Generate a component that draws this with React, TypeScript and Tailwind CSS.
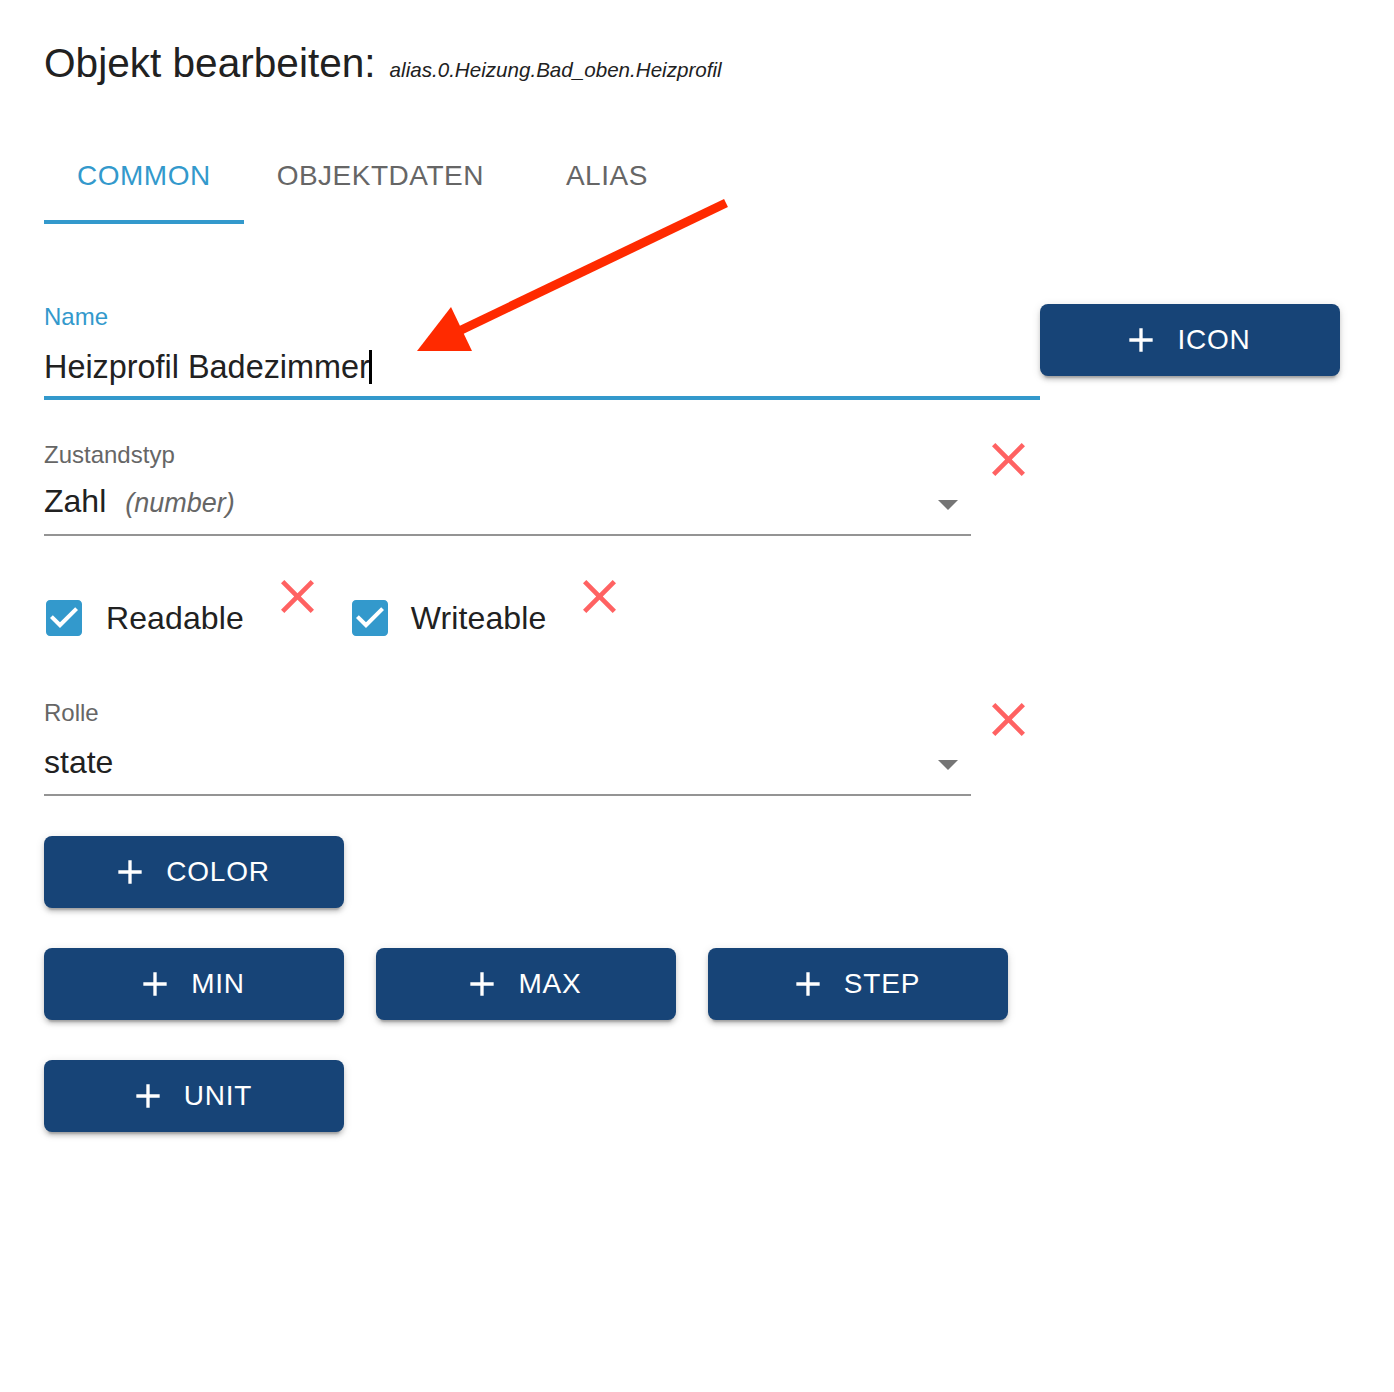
import React from "react";

const BLUE = "#3399cc";

function PlusIcon() {
  return (
    <svg viewBox="0 0 24 24" className="w-[40px] h-[40px] shrink-0 -ml-[8px]" fill="white">
      <path d="M19 13h-6v6h-2v-6H5v-2h6V5h2v6h6v2z" />
    </svg>
  );
}

function AddButton({ label }: { label: string }) {
  return (
    <div className="w-[300px] h-[72px] rounded-[8px] bg-[#174477] flex items-center justify-center text-white text-[28px] leading-[32px] tracking-[0.8px] shadow-[0_6px_2px_-4px_rgba(0,0,0,0.2),0_4px_4px_0_rgba(0,0,0,0.14),0_2px_10px_0_rgba(0,0,0,0.12)]">
      <PlusIcon />
      <span className="ml-[16px]">{label}</span>
    </div>
  );
}

function RedX({ className = "" }: { className?: string }) {
  return (
    <svg viewBox="5 5 14 14" className={"w-[33px] h-[33px] shrink-0 " + className} fill="#ff6262">
      <path d="M19 6.41 17.59 5 12 10.59 6.41 5 5 6.41 10.59 12 5 17.59 6.41 19 12 13.41 17.59 19 19 17.59 13.41 12z" />
    </svg>
  );
}

function DropArrow() {
  return (
    <svg viewBox="0 0 24 24" className="w-[48px] h-[48px] shrink-0 -mr-[1px] mt-[4px]" fill="#757575">
      <path d="M7 10l5 5 5-5z" />
    </svg>
  );
}

function CheckIcon() {
  return (
    <svg viewBox="0 0 24 24" className="w-[48px] h-[48px] shrink-0" fill={BLUE}>
      <path d="M19 3H5c-1.11 0-2 .9-2 2v14c0 1.1.89 2 2 2h14c1.11 0 2-.9 2-2V5c0-1.1-.89-2-2-2zm-9 14l-5-5 1.41-1.41L10 14.17l7.59-7.59L19 8l-9 9z" />
    </svg>
  );
}

function SelectField({
  label,
  children,
  labelClass,
  valueClass,
  xClass,
}: {
  label: string;
  children: React.ReactNode;
  labelClass: string;
  valueClass: string;
  xClass: string;
}) {
  return (
    <div className="flex items-start">
      <div className="w-[927px] flex flex-col">
        <div className={"h-[28px] leading-[28px] text-[24px] text-[#666666] " + labelClass}>{label}</div>
        <div className={"h-[40px] flex items-center justify-between " + valueClass}>
          <div className="text-[32px] leading-[40px] text-[#212121] flex items-baseline">{children}</div>
          <DropArrow />
        </div>
        <div className="mt-[12px] h-[2px] bg-[#949494]" />
      </div>
      <RedX className={"ml-[21px] " + xClass} />
    </div>
  );
}

export default function App() {
  return (
    <div className="relative w-[1394px] h-[1392px] bg-white font-['Liberation_Sans',Arial,sans-serif] text-[#212121]">
      <div className="px-[44px] flex flex-col">
        {/* Title */}
        <div className="pt-[39px] h-[87px] flex items-baseline">
          <span className="text-[40.6px] leading-[48px]">Objekt bearbeiten:</span>
          <span className="ml-[14px] text-[20.6px] italic">alias.0.Heizung.Bad_oben.Heizprofil</span>
        </div>

        {/* Tabs */}
        <div className="mt-[41px] h-[96px] flex">
          <div className="relative h-[96px] px-[33px] min-w-[180px] flex items-center justify-center text-[28px] leading-[32px] tracking-[0.5px] text-[#3399cc]">
            COMMON
            <div className="absolute left-0 right-0 bottom-0 h-[4px] bg-[#3399cc]" />
          </div>
          <div className="h-[96px] px-[33px] min-w-[180px] flex items-center justify-center text-[28px] leading-[32px] tracking-[0.5px] text-[#666666]">
            OBJEKTDATEN
          </div>
          <div className="h-[96px] px-[33px] min-w-[180px] flex items-center justify-center text-[28px] leading-[32px] tracking-[0.5px] text-[#666666]">
            ALIAS
          </div>
        </div>

        {/* Name */}
        <div className="mt-[79px] flex items-start">
          <div className="w-[996px] flex flex-col">
            <div className="h-[28px] leading-[28px] text-[24px] text-[#3399cc]">Name</div>
            <div className="mt-[16px] h-[40px] text-[32.4px] leading-[40px] text-[#212121] flex items-center">
              <span>Heizprofil Badezimmer</span>
              <span className="inline-block w-[3px] h-[34px] bg-black -ml-[1px]" />
            </div>
            <div className="mt-[9px] h-[4px] bg-[#3399cc]" />
          </div>
          <div className="mt-[1px]">
            <AddButton label="ICON" />
          </div>
        </div>

        {/* Zustandstyp */}
        <div className="mt-[42px]">
          <SelectField label="Zustandstyp" labelClass="-mt-[1px]" valueClass="mt-[13px]" xClass="mt-[1px]">
            <span>Zahl</span>
            <span className="ml-[19px] italic text-[27px] text-[#666666]">(number)</span>
          </SelectField>
        </div>

        {/* Checkboxes */}
        <div className="mt-[44px] flex items-start">
          <div className="-ml-[4px] mt-[14px] flex items-center h-[48px]">
            <CheckIcon />
            <span className="ml-[18px] text-[32px] leading-[48px] tracking-[0.1px]">Readable</span>
          </div>
          <RedX className="ml-[37px]" />
          <div className="ml-[32px] mt-[14px] flex items-center h-[48px]">
            <CheckIcon />
            <span className="ml-[17px] text-[32px] leading-[48px] tracking-[0.1px]">Writeable</span>
          </div>
          <RedX className="ml-[37px]" />
        </div>

        {/* Rolle */}
        <div className="mt-[57px]">
          <SelectField label="Rolle" labelClass="" valueClass="mt-[15px]" xClass="mt-[4px]">
            <span>state</span>
          </SelectField>
        </div>

        {/* Buttons */}
        <div className="mt-[40px] flex">
          <AddButton label="COLOR" />
        </div>
        <div className="mt-[40px] flex gap-[32px]">
          <AddButton label="MIN" />
          <AddButton label="MAX" />
          <AddButton label="STEP" />
        </div>
        <div className="mt-[40px] flex">
          <AddButton label="UNIT" />
        </div>
      </div>

      {/* Annotation arrow */}
      <svg className="absolute left-0 top-0 pointer-events-none" width="1394" height="1392">
        <line x1="726" y1="203" x2="455" y2="333" stroke="#ff2a00" strokeWidth="9" />
        <polygon points="417,351 451,307 472,351" fill="#ff2a00" />
      </svg>
    </div>
  );
}
